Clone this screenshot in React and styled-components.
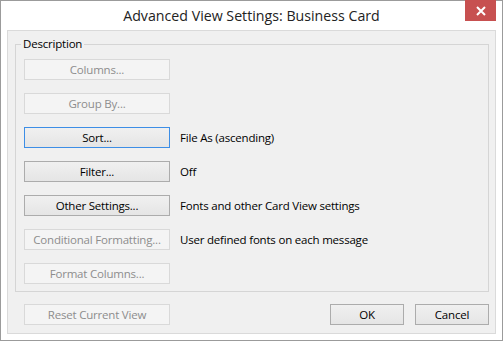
import React from 'react';
import styled, { createGlobalStyle } from 'styled-components';

const Global = createGlobalStyle`
  html, body {
    margin: 0;
    padding: 0;
    background: #ffffff;
  }
  * {
    box-sizing: border-box;
  }
`;

const Window = styled.div`
  position: relative;
  width: 503px;
  height: 341px;
  display: flex;
  flex-direction: column;
  background: #ffffff;
  border: 1px solid #9b9b9b;
  font-family: 'Open Sans', 'Noto Sans', sans-serif;
  color: #000;
`;

const TitleBar = styled.div`
  height: 29px;
  display: flex;
  align-items: center;
  justify-content: center;
  font-size: 14.2px;
  color: #222;
  padding-bottom: 1px;
`;

const CloseButton = styled.div`
  position: absolute;
  top: -1px;
  right: 6px;
  width: 31px;
  height: 21px;
  background: #c75050;
  display: flex;
  align-items: center;
  justify-content: center;
`;

const Client = styled.div`
  flex: 1;
  margin: 0 6px 6px 6px;
  border: 1px solid #dadada;
  background: #f0f0f0;
  padding: 6px 6px 8px 7px;
  display: flex;
  flex-direction: column;
`;

const GroupBox = styled.fieldset`
  margin: 0;
  border: 1px solid #d5d5d5;
  padding: 8px 8px 7px 8px;
  display: flex;
  flex-direction: column;
  gap: 13px;
`;

const Legend = styled.legend`
  font-size: 11.5px;
  letter-spacing: -0.2px;
  padding: 0 2px;
  margin-left: -3px;
  line-height: 14px;
`;

const Row = styled.div`
  display: flex;
  align-items: center;
  gap: 10px;
`;

const Button = styled.div`
  width: ${p => p.$w || 146}px;
  height: 21px;
  display: flex;
  align-items: center;
  justify-content: center;
  font-size: 11.5px;
  letter-spacing: -0.2px;
  white-space: nowrap;
  border: 1px solid ${p => (p.$focus ? '#3d8ee6' : p.$disabled ? '#d9d9d9' : '#acacac')};
  background: ${p => (p.$disabled ? '#f4f4f4' : 'linear-gradient(#f0f0f0, #e5e5e5)')};
  color: ${p => (p.$disabled ? '#8d8d8d' : '#000')};
`;

const Info = styled.span`
  font-size: 11.5px;
  letter-spacing: -0.2px;
  white-space: nowrap;
`;

const Footer = styled.div`
  display: flex;
  align-items: center;
  margin-top: 12px;
  padding-left: 9px;
  gap: 11px;
`;

const Spacer = styled.div`
  flex: 1;
`;

const rows = [
  { label: 'Columns...', disabled: true },
  { label: 'Group By...', disabled: true },
  { label: 'Sort...', info: 'File As (ascending)', focus: true },
  { label: 'Filter...', info: 'Off' },
  { label: 'Other Settings...', info: 'Fonts and other Card View settings' },
  { label: 'Conditional Formatting...', info: 'User defined fonts on each message', disabled: true },
  { label: 'Format Columns...', disabled: true },
];

export default function App() {
  return (
    <>
      <Global />
      <Window>
        <TitleBar>Advanced View Settings: Business Card</TitleBar>
        <CloseButton>
          <svg width="10" height="10" viewBox="0 0 10 10">
            <path d="M1 1 L9 9 M9 1 L1 9" stroke="#fff" strokeWidth="2" />
          </svg>
        </CloseButton>
        <Client>
          <GroupBox>
            <Legend>Description</Legend>
            {rows.map(r => (
              <Row key={r.label}>
                <Button $disabled={r.disabled} $focus={r.focus}>{r.label}</Button>
                {r.info && <Info>{r.info}</Info>}
              </Row>
            ))}
          </GroupBox>
          <Footer>
            <Button $disabled>Reset Current View</Button>
            <Spacer />
            <Button $w={74}>OK</Button>
            <Button $w={74}>Cancel</Button>
          </Footer>
        </Client>
      </Window>
    </>
  );
}
